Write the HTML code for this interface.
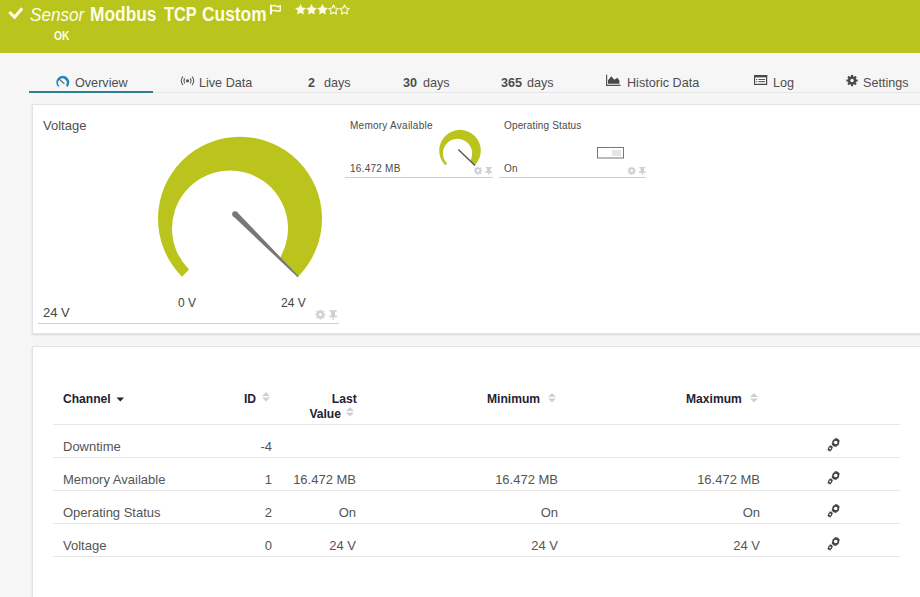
<!DOCTYPE html>
<html><head><meta charset="utf-8">
<style>
*{box-sizing:border-box;margin:0;padding:0}
html,body{width:920px;height:597px;overflow:hidden;background:#f6f6f6;font-family:"Liberation Sans",sans-serif;}
.a{position:absolute;white-space:nowrap}
#hdr{position:absolute;left:0;top:0;width:920px;height:53px;background:#b9c41c}
.ht{color:#fdfde6}
.tt{top:5px;font-size:19.5px;line-height:19px;font-weight:bold;transform:scaleX(0.89);transform-origin:0 0}
.tab{color:#4e4e4e;font-size:13px;line-height:13px;transform:scaleX(0.97);transform-origin:0 0}
.card{position:absolute;background:#fff;border:1px solid #e2e2e2;box-shadow:0 1px 2px rgba(0,0,0,.12)}
.lbl{color:#4f4f4f}
.mt{color:#4a4a4a;letter-spacing:0.25px}
.th{color:#1e2232;font-weight:bold;font-size:13px;line-height:13px;transform:scaleX(0.93);transform-origin:0 0}
.thr{transform-origin:100% 0}
.td{color:#555;font-size:13px;line-height:13px}
.rl{position:absolute;left:53px;width:847px;height:1px;background:#e6e6e6}
</style></head><body>
<div id="hdr"></div>
<!-- check -->
<svg class="a" style="left:7px;top:6px" width="18" height="15" viewBox="0 0 18 15"><path d="M2.3 6.0 L7.6 11.2 L15.2 2.2" fill="none" stroke="#fdfde6" stroke-width="3.1"/></svg>
<div class="a ht" style="left:30px;top:6px;font-size:18px;line-height:18px;font-style:italic;transform:scaleX(0.95);transform-origin:0 0">Sensor</div>
<div class="a ht tt" style="left:90px">Modbus</div>
<div class="a ht tt" style="left:163.5px;transform:scaleX(0.84)">TCP</div>
<div class="a ht tt" style="left:201.5px">Custom</div>
<!-- flag -->
<svg class="a" style="left:266px;top:2px" width="20" height="16" viewBox="266 2 20 16"><path d="M271 4.8 V14.4" stroke="#fdfde6" stroke-width="2"/><path d="M272 5.9 Q274.5 5.2 276.5 6.2 Q278.5 7 280.3 6 V10.8 Q278.5 11.6 276.5 10.8 Q274.5 10 272 10.8" fill="none" stroke="#fdfde6" stroke-width="1.5"/></svg>
<!-- stars -->
<svg class="a" style="left:294px;top:4px" width="58" height="12" viewBox="0 0 58 12">
<path d="M6.50 0.10 L8.20 3.45 L11.92 4.04 L9.26 6.70 L9.85 10.41 L6.50 8.70 L3.15 10.41 L3.74 6.70 L1.08 4.04 L4.80 3.45 Z M17.50 0.10 L19.20 3.45 L22.92 4.04 L20.26 6.70 L20.85 10.41 L17.50 8.70 L14.15 10.41 L14.74 6.70 L12.08 4.04 L15.80 3.45 Z M28.50 0.10 L30.20 3.45 L33.92 4.04 L31.26 6.70 L31.85 10.41 L28.50 8.70 L25.15 10.41 L25.74 6.70 L23.08 4.04 L26.80 3.45 Z" fill="#fdfde6"/>
<path d="M39.50 1.00 L40.97 3.98 L44.26 4.45 L41.88 6.77 L42.44 10.05 L39.50 8.50 L36.56 10.05 L37.12 6.77 L34.74 4.45 L38.03 3.98 Z M50.50 1.00 L51.97 3.98 L55.26 4.45 L52.88 6.77 L53.44 10.05 L50.50 8.50 L47.56 10.05 L48.12 6.77 L45.74 4.45 L49.03 3.98 Z" fill="none" stroke="#fdfde6" stroke-width="1.1" stroke-linejoin="round"/>
</svg>
<div class="a ht" style="left:54px;top:30px;font-size:12.5px;line-height:12px;font-weight:bold;transform:scaleX(0.82);transform-origin:0 0">OK</div>

<!-- tabs -->
<div class="a" style="left:153px;top:92px;width:767px;height:1px;background:#e6e6e6"></div>
<div class="a" style="left:29px;top:91px;width:124px;height:2px;background:#2b8098"></div>
<svg class="a" style="left:52px;top:72px" width="22" height="18" viewBox="52 72 22 18"><path d="M58.20 86.90 A6.50 6.50 0 1 1 67.40 86.90 L65.86 85.36 A4.29 4.29 0 1 0 59.31 85.79 Z" fill="#2587b3"/><path d="M59.8 79.6 L64 83.4" stroke="#555" stroke-width="1.1" stroke-linecap="round"/></svg>
<div class="a tab" style="left:75px;top:76px">Overview</div>
<svg class="a" style="left:178px;top:72px" width="20" height="16" viewBox="178 72 20 16"><circle cx="187.5" cy="80.8" r="1.6" fill="#555"/><path d="M185 78.3 A3.5 3.5 0 0 0 185 83.3 M190 78.3 A3.5 3.5 0 0 1 190 83.3 M183 76.6 A6 6 0 0 0 183 85 M192 76.6 A6 6 0 0 1 192 85" fill="none" stroke="#555" stroke-width="1.1"/></svg>
<div class="a tab" style="left:199px;top:76px">Live Data</div>
<div class="a tab" style="left:308px;top:76px;font-weight:bold">2</div>
<div class="a tab" style="left:324px;top:76px">days</div>
<div class="a tab" style="left:403px;top:76px;font-weight:bold">30</div>
<div class="a tab" style="left:423px;top:76px">days</div>
<div class="a tab" style="left:501px;top:76px;font-weight:bold">365</div>
<div class="a tab" style="left:527px;top:76px">days</div>
<svg class="a" style="left:600px;top:70px" width="25" height="20" viewBox="600 70 25 20"><path d="M606.6 74.8 V85.4 H620.6" fill="none" stroke="#555" stroke-width="1.2"/><path d="M608 83.8 L608 80.2 L611.3 76.2 L614.3 79.8 L617.3 77.8 L619.4 80.5 L619.4 83.8 Z" fill="#4a4a4a"/></svg>
<div class="a tab" style="left:627px;top:76px">Historic Data</div>
<svg class="a" style="left:750px;top:70px" width="22" height="20" viewBox="750 70 22 20"><rect x="754.6" y="75.6" width="12" height="8.8" fill="#fff" stroke="#4a4a4a" stroke-width="1.2"/><rect x="754" y="75" width="13.2" height="2.4" fill="#4a4a4a"/><path d="M756 79.5 H757.2 M758.4 79.5 H765.2 M756 81.6 H757.2 M758.4 81.6 H765.2" stroke="#555" stroke-width="1"/><path d="M758.4 83.3 H765.2" stroke="#bbb" stroke-width="0.8"/></svg>
<div class="a tab" style="left:773px;top:76px">Log</div>
<svg class="a" style="left:842px;top:70px" width="20" height="20" viewBox="842 70 20 20"><g fill="#4a4a4a"><circle cx="852.05" cy="80.55" r="4.2"/><rect x="851" y="74.9" width="2.1" height="11.3" transform="rotate(0 852.05 80.55)"/><rect x="851" y="74.9" width="2.1" height="11.3" transform="rotate(45 852.05 80.55)"/><rect x="851" y="74.9" width="2.1" height="11.3" transform="rotate(90 852.05 80.55)"/><rect x="851" y="74.9" width="2.1" height="11.3" transform="rotate(135 852.05 80.55)"/></g><circle cx="852.05" cy="80.55" r="1.7" fill="#f6f6f6"/></svg>
<div class="a tab" style="left:863px;top:76px">Settings</div>

<!-- card 1 -->
<div class="card" style="left:32px;top:104px;width:900px;height:230px"></div>
<div class="a lbl" style="left:43px;top:119px;font-size:13px;line-height:13px">Voltage</div>
<svg class="a" style="left:0;top:0" width="920" height="340" viewBox="0 0 920 340">
<path d="M182.02 276.68 A82.00 82.00 0 1 1 297.98 276.68 L279.70 258.40 A58.00 58.00 0 1 0 189.09 269.61 Z" fill="#bac41c"/>
<path d="M232.95 216.05 L237.05 211.95 L298.7 276.3 L297.7 277.3 Z" fill="#777"/>
<circle cx="235" cy="214" r="2.85" fill="#777"/>
<path d="M445.29 165.31 A20.80 20.80 0 1 1 474.71 165.31 L470.13 160.73 A14.60 14.60 0 1 0 447.03 163.57 Z" fill="#bac41c"/>
<path d="M458.3 149.4 L475 165.6" stroke="#555" stroke-width="1.4"/>
<rect x="597.5" y="147.5" width="26" height="10.5" fill="none" stroke="#777" stroke-width="1"/>
<rect x="612" y="150" width="9" height="6" fill="#e4e4e4"/>
<line x1="38" y1="323.5" x2="339" y2="323.5" stroke="#cfcfcf" stroke-width="1"/>
<line x1="345" y1="177.5" x2="493" y2="177.5" stroke="#cfcfcf" stroke-width="1"/>
<line x1="499" y1="177.5" x2="646" y2="177.5" stroke="#cfcfcf" stroke-width="1"/>
<g transform="translate(320.4 314.6) scale(1.2)"><g fill="#d0d0d0"><circle cx="0" cy="0" r="2.9"/><rect x="-0.85" y="-4.1" width="1.7" height="8.2"/><rect x="-0.85" y="-4.1" width="1.7" height="8.2" transform="rotate(45)"/><rect x="-0.85" y="-4.1" width="1.7" height="8.2" transform="rotate(90)"/><rect x="-0.85" y="-4.1" width="1.7" height="8.2" transform="rotate(135)"/>
<path d="M7.6 -3.6 H13.6 V-2.4 H12.3 V0.9 H13.9 V2.3 H11.1 V4.4 H10.1 V2.3 H7.3 V0.9 H8.9 V-2.4 H7.6 Z"/></g><circle cx="0" cy="0" r="1.3" fill="#fff"/></g>
<g transform="translate(478.1 170.6)"><g fill="#d0d0d0"><circle cx="0" cy="0" r="2.9"/><rect x="-0.85" y="-4.1" width="1.7" height="8.2"/><rect x="-0.85" y="-4.1" width="1.7" height="8.2" transform="rotate(45)"/><rect x="-0.85" y="-4.1" width="1.7" height="8.2" transform="rotate(90)"/><rect x="-0.85" y="-4.1" width="1.7" height="8.2" transform="rotate(135)"/>
<path d="M7.6 -3.6 H13.6 V-2.4 H12.3 V0.9 H13.9 V2.3 H11.1 V4.4 H10.1 V2.3 H7.3 V0.9 H8.9 V-2.4 H7.6 Z"/></g><circle cx="0" cy="0" r="1.3" fill="#fff"/></g>
<g transform="translate(631.7 170.7)"><g fill="#d0d0d0"><circle cx="0" cy="0" r="2.9"/><rect x="-0.85" y="-4.1" width="1.7" height="8.2"/><rect x="-0.85" y="-4.1" width="1.7" height="8.2" transform="rotate(45)"/><rect x="-0.85" y="-4.1" width="1.7" height="8.2" transform="rotate(90)"/><rect x="-0.85" y="-4.1" width="1.7" height="8.2" transform="rotate(135)"/>
<path d="M7.6 -3.6 H13.6 V-2.4 H12.3 V0.9 H13.9 V2.3 H11.1 V4.4 H10.1 V2.3 H7.3 V0.9 H8.9 V-2.4 H7.6 Z"/></g><circle cx="0" cy="0" r="1.3" fill="#fff"/></g>
</svg>
<div class="a" style="left:178px;top:297px;font-size:12px;line-height:12px;color:#444">0 V</div>
<div class="a" style="left:281px;top:297px;font-size:12px;line-height:12px;color:#444">24 V</div>
<div class="a" style="left:43px;top:306px;font-size:13px;line-height:13px;color:#444">24 V</div>
<div class="a mt" style="left:350px;top:121px;font-size:10px;line-height:10px">Memory Available</div>
<div class="a mt" style="left:350px;top:164px;font-size:10px;line-height:10px">16.472 MB</div>
<div class="a mt" style="left:504px;top:121px;font-size:10px;line-height:10px;letter-spacing:0.15px">Operating Status</div>
<div class="a mt" style="left:504px;top:164px;font-size:10px;line-height:10px">On</div>

<!-- card 2 -->
<div class="card" style="left:32px;top:346px;width:900px;height:300px"></div>
<div class="a th" style="left:63px;top:392px">Channel</div>
<svg class="a" style="left:116px;top:397px" width="9" height="5" viewBox="0 0 9 5"><path d="M0.5 0.5 H8 L4.25 4.5 Z" fill="#1e2232"/></svg>
<div class="a th" style="left:244px;top:392px">ID</div>
<div class="a th thr" style="right:563px;top:392px;text-align:right">Last</div>
<div class="a th thr" style="right:579px;top:407px;text-align:right">Value</div>
<div class="a th" style="left:487px;top:392px">Minimum</div>
<div class="a th" style="left:686px;top:392px">Maximum</div>
<svg class="a" style="left:0;top:380px" width="920" height="50" viewBox="0 380 920 50">
<g transform="translate(262 392)"><path d="M0 4 L4 0 L8 4 Z M0 5.5 L4 9.5 L8 5.5 Z" fill="#d0d0d0"/></g>
<g transform="translate(346 407)"><path d="M0 4 L4 0 L8 4 Z M0 5.5 L4 9.5 L8 5.5 Z" fill="#d0d0d0"/></g>
<g transform="translate(548 393)"><path d="M0 4 L4 0 L8 4 Z M0 5.5 L4 9.5 L8 5.5 Z" fill="#d0d0d0"/></g>
<g transform="translate(750 393)"><path d="M0 4 L4 0 L8 4 Z M0 5.5 L4 9.5 L8 5.5 Z" fill="#d0d0d0"/></g>
</svg>
<div class="rl" style="top:424px"></div>
<div class="rl" style="top:457px"></div>
<div class="rl" style="top:490px"></div>
<div class="rl" style="top:523px"></div>
<div class="rl" style="top:556px"></div>

<div class="a td" style="left:63px;top:440px">Downtime</div>
<div class="a td" style="right:648px;top:440px">-4</div>
<div class="a td" style="left:63px;top:473px">Memory Available</div>
<div class="a td" style="right:648px;top:473px">1</div>
<div class="a td" style="right:564px;top:473px">16.472 MB</div>
<div class="a td" style="right:362px;top:473px">16.472 MB</div>
<div class="a td" style="right:160px;top:473px">16.472 MB</div>
<div class="a td" style="left:63px;top:506px">Operating Status</div>
<div class="a td" style="right:648px;top:506px">2</div>
<div class="a td" style="right:564px;top:506px">On</div>
<div class="a td" style="right:362px;top:506px">On</div>
<div class="a td" style="right:160px;top:506px">On</div>
<div class="a td" style="left:63px;top:539px">Voltage</div>
<div class="a td" style="right:648px;top:539px">0</div>
<div class="a td" style="right:564px;top:539px">24 V</div>
<div class="a td" style="right:362px;top:539px">24 V</div>
<div class="a td" style="right:160px;top:539px">24 V</div>
<svg class="a" style="left:0;top:430px" width="920" height="130" viewBox="0 430 920 130">
<g transform="translate(828.2 438)"><g fill="#444"><circle cx="7.50" cy="4.50" r="3.50"/><rect x="6.55" y="0.20" width="1.90" height="8.60" transform="rotate(0.0 7.50 4.50)"/><rect x="6.55" y="0.20" width="1.90" height="8.60" transform="rotate(30.0 7.50 4.50)"/><rect x="6.55" y="0.20" width="1.90" height="8.60" transform="rotate(60.0 7.50 4.50)"/></g><circle cx="7.50" cy="4.50" r="1.80" fill="#fff"/><g fill="#444"><circle cx="2.00" cy="10.40" r="2.10"/><rect x="1.35" y="7.50" width="1.30" height="5.80" transform="rotate(0.0 2.00 10.40)"/><rect x="1.35" y="7.50" width="1.30" height="5.80" transform="rotate(30.0 2.00 10.40)"/><rect x="1.35" y="7.50" width="1.30" height="5.80" transform="rotate(60.0 2.00 10.40)"/></g><circle cx="2.00" cy="10.40" r="0.90" fill="#fff"/></g>
<g transform="translate(828.2 471)"><g fill="#444"><circle cx="7.50" cy="4.50" r="3.50"/><rect x="6.55" y="0.20" width="1.90" height="8.60" transform="rotate(0.0 7.50 4.50)"/><rect x="6.55" y="0.20" width="1.90" height="8.60" transform="rotate(30.0 7.50 4.50)"/><rect x="6.55" y="0.20" width="1.90" height="8.60" transform="rotate(60.0 7.50 4.50)"/></g><circle cx="7.50" cy="4.50" r="1.80" fill="#fff"/><g fill="#444"><circle cx="2.00" cy="10.40" r="2.10"/><rect x="1.35" y="7.50" width="1.30" height="5.80" transform="rotate(0.0 2.00 10.40)"/><rect x="1.35" y="7.50" width="1.30" height="5.80" transform="rotate(30.0 2.00 10.40)"/><rect x="1.35" y="7.50" width="1.30" height="5.80" transform="rotate(60.0 2.00 10.40)"/></g><circle cx="2.00" cy="10.40" r="0.90" fill="#fff"/></g>
<g transform="translate(828.2 504)"><g fill="#444"><circle cx="7.50" cy="4.50" r="3.50"/><rect x="6.55" y="0.20" width="1.90" height="8.60" transform="rotate(0.0 7.50 4.50)"/><rect x="6.55" y="0.20" width="1.90" height="8.60" transform="rotate(30.0 7.50 4.50)"/><rect x="6.55" y="0.20" width="1.90" height="8.60" transform="rotate(60.0 7.50 4.50)"/></g><circle cx="7.50" cy="4.50" r="1.80" fill="#fff"/><g fill="#444"><circle cx="2.00" cy="10.40" r="2.10"/><rect x="1.35" y="7.50" width="1.30" height="5.80" transform="rotate(0.0 2.00 10.40)"/><rect x="1.35" y="7.50" width="1.30" height="5.80" transform="rotate(30.0 2.00 10.40)"/><rect x="1.35" y="7.50" width="1.30" height="5.80" transform="rotate(60.0 2.00 10.40)"/></g><circle cx="2.00" cy="10.40" r="0.90" fill="#fff"/></g>
<g transform="translate(828.2 537)"><g fill="#444"><circle cx="7.50" cy="4.50" r="3.50"/><rect x="6.55" y="0.20" width="1.90" height="8.60" transform="rotate(0.0 7.50 4.50)"/><rect x="6.55" y="0.20" width="1.90" height="8.60" transform="rotate(30.0 7.50 4.50)"/><rect x="6.55" y="0.20" width="1.90" height="8.60" transform="rotate(60.0 7.50 4.50)"/></g><circle cx="7.50" cy="4.50" r="1.80" fill="#fff"/><g fill="#444"><circle cx="2.00" cy="10.40" r="2.10"/><rect x="1.35" y="7.50" width="1.30" height="5.80" transform="rotate(0.0 2.00 10.40)"/><rect x="1.35" y="7.50" width="1.30" height="5.80" transform="rotate(30.0 2.00 10.40)"/><rect x="1.35" y="7.50" width="1.30" height="5.80" transform="rotate(60.0 2.00 10.40)"/></g><circle cx="2.00" cy="10.40" r="0.90" fill="#fff"/></g>
</svg>
</body></html>
